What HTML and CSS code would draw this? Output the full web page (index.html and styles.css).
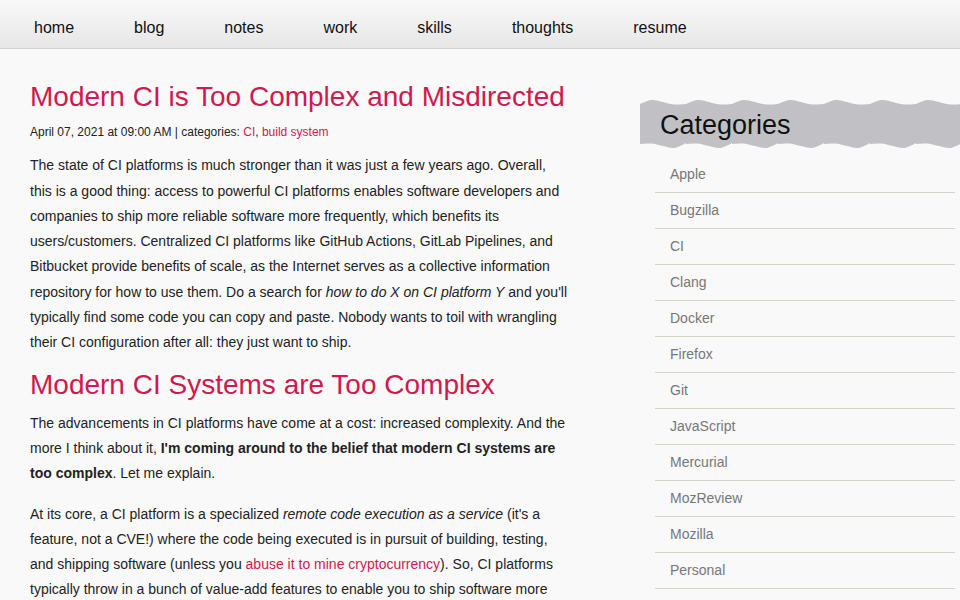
FILE: index.html
```html
<!DOCTYPE html>
<html lang="en">
<head>
    <meta charset="UTF-8">
    <meta name="viewport" content="width=device-width, initial-scale=1.0">
    <title>Modern CI is Too Complex and Misdirected</title>
    <link rel="stylesheet" href="styles.css">
</head>
<body>

<nav class="topnav">
    <ul>
        <li><a href="#">home</a></li>
        <li><a href="#">blog</a></li>
        <li><a href="#">notes</a></li>
        <li><a href="#">work</a></li>
        <li><a href="#">skills</a></li>
        <li><a href="#">thoughts</a></li>
        <li><a href="#">resume</a></li>
    </ul>
</nav>

<div class="page">
    <main class="post">
        <h1>Modern CI is Too Complex and Misdirected</h1>
        <p class="meta">April 07, 2021 at 09:00 AM | categories: <a href="#">CI</a>, <a href="#">build system</a></p>

        <p>The state of CI platforms is much stronger than it was just a few years ago. Overall, this is a good thing: access to powerful CI platforms enables software developers and companies to ship more reliable software more frequently, which benefits its users/customers. Centralized CI platforms like GitHub Actions, GitLab Pipelines, and Bitbucket provide benefits of scale, as the Internet serves as a collective information repository for how to use them. Do a search for <em>how to do X on CI platform Y</em> and you'll typically find some code you can copy and paste. Nobody wants to toil with wrangling their CI configuration after all: they just want to ship.</p>

        <h2>Modern CI Systems are Too Complex</h2>

        <p>The advancements in CI platforms have come at a cost: increased complexity. And the more I think about it, <strong>I'm coming around to the belief that modern CI systems are too complex</strong>. Let me explain.</p>

        <p>At its core, a CI platform is a specialized <em>remote code execution as a service</em> (it's a feature, not a CVE!) where the code being executed is in pursuit of building, testing, and shipping software (unless you <a href="#">abuse it to mine cryptocurrency</a>). So, CI platforms typically throw in a bunch of value-add features to enable you to ship software more quickly and reliably.</p>
    </main>

    <aside class="sidebar">
        <h3 class="side-title">Categories</h3>
        <ul class="cat-list">
            <li><a href="#">Apple</a></li>
            <li><a href="#">Bugzilla</a></li>
            <li><a href="#">CI</a></li>
            <li><a href="#">Clang</a></li>
            <li><a href="#">Docker</a></li>
            <li><a href="#">Firefox</a></li>
            <li><a href="#">Git</a></li>
            <li><a href="#">JavaScript</a></li>
            <li><a href="#">Mercurial</a></li>
            <li><a href="#">MozReview</a></li>
            <li><a href="#">Mozilla</a></li>
            <li><a href="#">Personal</a></li>
            <li><a href="#">Python</a></li>
        </ul>
    </aside>
</div>

</body>
</html>
```

FILE: styles.css
```css
body {
    font-family: "Liberation Sans", Arial, sans-serif;
    background-color: #f9f9f9;
    color: #222;
    margin: 0;
}

a {
    text-decoration: none;
}

/* top navigation */

.topnav {
    height: 49px;
    background: linear-gradient(#f9f9f9, #e6e6e6);
    border-bottom: 1px solid #d2d2d2;
    box-sizing: border-box;
}

.topnav ul {
    display: flex;
    list-style: none;
    margin: 0;
    padding: 0 0 0 4px;
}

.topnav a {
    display: block;
    padding: 0 30px;
    line-height: 56px;
    font-size: 16px;
    color: #111;
}

/* page columns */

.page {
    display: flex;
    justify-content: space-between;
}

.post {
    width: 540px;
    padding-left: 30px;
    font-size: 14px;
    line-height: 25.3px;
}

.post h1,
.post h2 {
    font-weight: normal;
    font-size: 28px;
    line-height: 34px;
    color: #cf1a4e;
    margin: 0;
}

.post h1 {
    margin-top: 31px;
}

/* negative top margin collapses with the paragraph's 15px */
.post h2 {
    margin: -3px 0 9px;
}

.post p {
    margin: 0 0 15px;
}

.post .meta {
    font-size: 12px;
    margin: 6px 0 8px;
}

.post a {
    color: #cf1a4e;
}

/* sidebar */

.sidebar {
    width: 320px;
    margin-top: 56px;
}

.side-title {
    position: relative;
    margin: 0;
    padding: 3px 20px 1px;
    font-weight: normal;
    font-size: 27px;
    line-height: 34px;
    color: #111;
    background-color: #c1c1c5;
}

.side-title::before,
.side-title::after {
    content: "";
    position: absolute;
    left: 0;
    right: 0;
    height: 7px;
    background-repeat: repeat-x;
    background-size: 46px 7px;
}

.side-title::before {
    top: -6px;
    background-image: url("data:image/svg+xml,%3Csvg xmlns='http://www.w3.org/2000/svg' width='46' height='7'%3E%3Cpath d='M0 5 C11 0 12 0 23 3 C34 6 35 6 46 5 L46 7 L0 7 Z' fill='%23c1c1c5'/%3E%3C/svg%3E");
}

.side-title::after {
    bottom: -6px;
    background-image: url("data:image/svg+xml,%3Csvg xmlns='http://www.w3.org/2000/svg' width='46' height='7'%3E%3Cpath d='M0 0 L46 0 L46 1 C35 7 34 7 23 4 C12 1 11 1 0 2 Z' fill='%23c1c1c5'/%3E%3C/svg%3E");
}

.cat-list {
    list-style: none;
    margin: 14px 5px 0 15px;
    padding: 0;
}

.cat-list li {
    border-bottom: 1px solid #d3d3c8;
}

.cat-list a {
    display: block;
    padding: 0 15px;
    line-height: 35px;
    font-size: 14px;
    color: #777;
}
```
